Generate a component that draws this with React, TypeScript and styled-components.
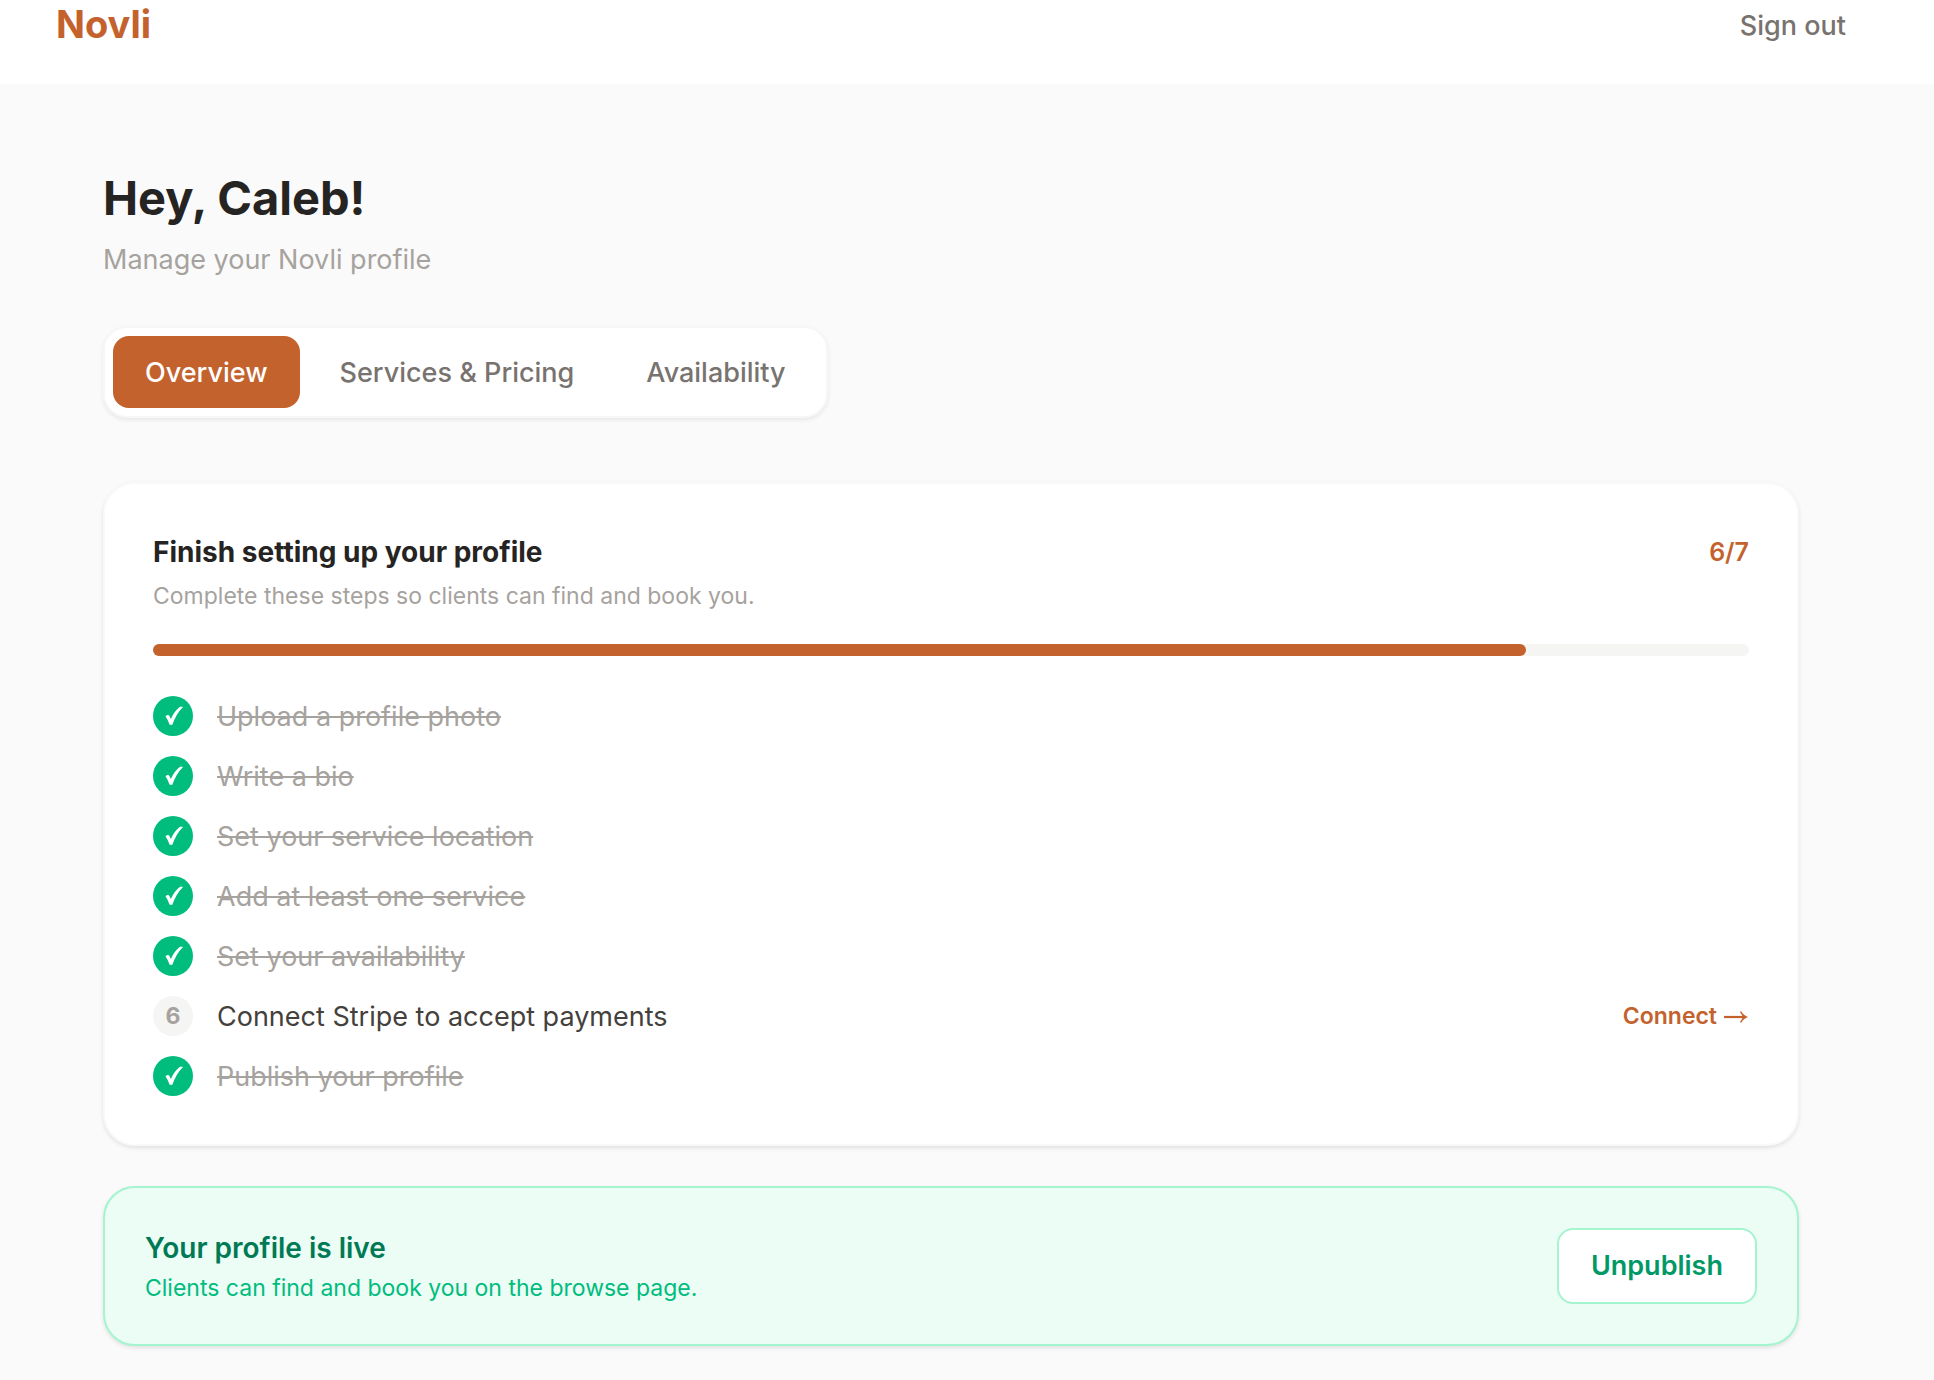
import React from "react";
import styled, { createGlobalStyle } from "styled-components";

const GlobalStyle = createGlobalStyle`
  *, *::before, *::after { box-sizing: border-box; }
  body {
    margin: 0;
    background: #fafafa;
    color: #262423;
    font-family: Inter, "Liberation Sans", sans-serif;
    font-size: 27px;
    line-height: 40px;
  }
  h1, h2, p, ul { margin: 0; padding: 0; }
  button { font: inherit; cursor: pointer; }
`;

const Header = styled.header`
  display: flex;
  align-items: flex-start;
  justify-content: space-between;
  height: 84px;
  padding: 0 88px 0 56px;
  background: #ffffff;
`;

const Logo = styled.a`
  color: #c4622d;
  font-size: 38px;
  font-weight: 700;
  line-height: 48px;
  text-decoration: none;
`;

const SignOut = styled.button`
  border: 0;
  padding: 6px 0;
  background: none;
  color: #78736f;
  font-weight: 500;
`;

const Main = styled.main`
  display: flex;
  flex-direction: column;
  padding: 80px 135px 32px 103px;
`;

const Title = styled.h1`
  font-size: 47px;
  font-weight: 700;
  line-height: 68px;
`;

const Subtitle = styled.p`
  padding-top: 8px;
  color: #a6a29e;
`;

const Tabs = styled.nav`
  display: flex;
  align-self: flex-start;
  gap: 8px;
  margin: 46px 0 64px;
  padding: 8px;
  border: 2px solid #f7f7f6;
  border-radius: 24px;
  background: #ffffff;
  box-shadow: 0 2px 4px rgba(0, 0, 0, 0.08);
`;

const Tab = styled.button<{ $active?: boolean }>`
  height: 72px;
  padding: 2px 32px 0;
  border: 0;
  border-radius: 16px;
  background: ${(p) => (p.$active ? "#c4622d" : "transparent")};
  color: ${(p) => (p.$active ? "#ffffff" : "#78736f")};
  font-weight: 500;
`;

const Card = styled.section`
  padding: 48px;
  border: 2px solid #f9f9f8;
  border-radius: 32px;
  background: #ffffff;
  box-shadow: 0 2px 4px rgba(0, 0, 0, 0.1);
`;

const CardHead = styled.div`
  display: flex;
  align-items: flex-start;
  justify-content: space-between;
`;

const Heading = styled.h2<{ $color: string; $weight: number }>`
  color: ${(p) => p.$color};
  font-size: 28px;
  font-weight: ${(p) => p.$weight};
  line-height: 40px;
`;

const TextStack = styled.div<{ $gap: number }>`
  display: flex;
  flex-direction: column;
  gap: ${(p) => p.$gap}px;
`;

const Note = styled.p<{ $color: string }>`
  color: ${(p) => p.$color};
  font-size: 23px;
  line-height: 32px;
`;

const Count = styled.span`
  color: #c4622d;
  font-size: 25px;
  font-weight: 600;
`;

const Track = styled.div`
  height: 12px;
  margin: 32px 0 40px;
  border-radius: 6px;
  background: #f5f5f4;
`;

const Fill = styled.div`
  height: 12px;
  border-radius: 6px;
  background: #c4622d;
`;

const Steps = styled.ul`
  display: flex;
  flex-direction: column;
  gap: 20px;
  list-style: none;
`;

const Step = styled.li`
  display: flex;
  align-items: center;
  gap: 24px;
  height: 40px;
`;

const Marker = styled.span<{ $done: boolean }>`
  display: flex;
  align-items: center;
  justify-content: center;
  width: 40px;
  height: 40px;
  border-radius: 50%;
  background: ${(p) => (p.$done ? "#00bc7d" : "#f5f5f4")};
  color: ${(p) => (p.$done ? "#ffffff" : "#a6a29e")};
  font-size: 23px;
  font-weight: 700;
`;

const StepText = styled.span<{ $done: boolean }>`
  flex: 1;
  padding-top: 2px;
  color: ${(p) => (p.$done ? "#a6a29e" : "#44403b")};

  span {
    text-decoration: ${(p) => (p.$done ? "line-through" : "none")};
    text-decoration-thickness: 2px;
  }
`;

const StepLink = styled.a`
  display: flex;
  align-items: center;
  gap: 6px;
  color: #c4622d;
  font-size: 23px;
  font-weight: 600;
  text-decoration: none;
`;

const Banner = styled.section`
  display: flex;
  align-items: center;
  justify-content: space-between;
  margin-top: 40px;
  padding: 40px;
  border: 2px solid #a4f4cf;
  border-radius: 32px;
  background: #ecfdf5;
  box-shadow: 0 2px 4px rgba(0, 0, 0, 0.1);
`;

const Unpublish = styled.button`
  height: 76px;
  padding: 0 32px;
  border: 2px solid #a4f4cf;
  border-radius: 16px;
  background: #ffffff;
  color: #009966;
  font-weight: 600;
`;

const steps = [
  { label: "Upload a profile photo", done: true },
  { label: "Write a bio", done: true },
  { label: "Set your service location", done: true },
  { label: "Add at least one service", done: true },
  { label: "Set your availability", done: true },
  { label: "Connect Stripe to accept payments", done: false },
  { label: "Publish your profile", done: true },
];

const Check = () => (
  <svg width="24" height="24" viewBox="0 0 24 24" aria-hidden="true">
    <path d="M4.500 12.200Q6 10.600 8 11.200L9.800 15Q13.500 7 19 2.800H22.200Q15 10 11.400 20.800H8.600Q6.800 15.500 4.500 12.200Z" fill="#fff" />
  </svg>
);

const Arrow = () => (
  <svg width="26" height="14" viewBox="0 0 26 14" aria-hidden="true">
    <path d="M1 8h22" stroke="currentColor" strokeWidth="2.2" />
    <path d="M18 2Q20.500 6.500 25 8Q20.500 9.500 18 14L17 13Q18.800 10.500 19.800 8Q18.800 5.500 17 3Z" fill="currentColor" />
  </svg>
);

export default function App() {
  return (
    <>
      <GlobalStyle />
      <Header>
        <Logo href="#">Novli</Logo>
        <SignOut type="button">Sign out</SignOut>
      </Header>
      <Main>
        <Title>Hey, Caleb!</Title>
        <Subtitle>Manage your Novli profile</Subtitle>
        <Tabs>
          <Tab type="button" $active>Overview</Tab>
          <Tab type="button">Services &amp; Pricing</Tab>
          <Tab type="button">Availability</Tab>
        </Tabs>
        <Card>
          <CardHead>
            <TextStack $gap={8}>
              <Heading $color="#262423" $weight={700}>Finish setting up your profile</Heading>
              <Note $color="#a6a29e">Complete these steps so clients can find and book you.</Note>
            </TextStack>
            <Count>6/7</Count>
          </CardHead>
          <Track>
            <Fill style={{ width: "86%" }} />
          </Track>
          <Steps>
            {steps.map((step, i) => (
              <Step key={step.label}>
                <Marker $done={step.done}>{step.done ? <Check /> : i + 1}</Marker>
                <StepText $done={step.done}><span>{step.label}</span></StepText>
                {!step.done && <StepLink href="#">Connect <Arrow /></StepLink>}
              </Step>
            ))}
          </Steps>
        </Card>
        <Banner>
          <TextStack $gap={4}>
            <Heading $color="#007a55" $weight={600}>Your profile is live</Heading>
            <Note $color="#00bc7d">Clients can find and book you on the browse page.</Note>
          </TextStack>
          <Unpublish type="button">Unpublish</Unpublish>
        </Banner>
      </Main>
    </>
  );
}
